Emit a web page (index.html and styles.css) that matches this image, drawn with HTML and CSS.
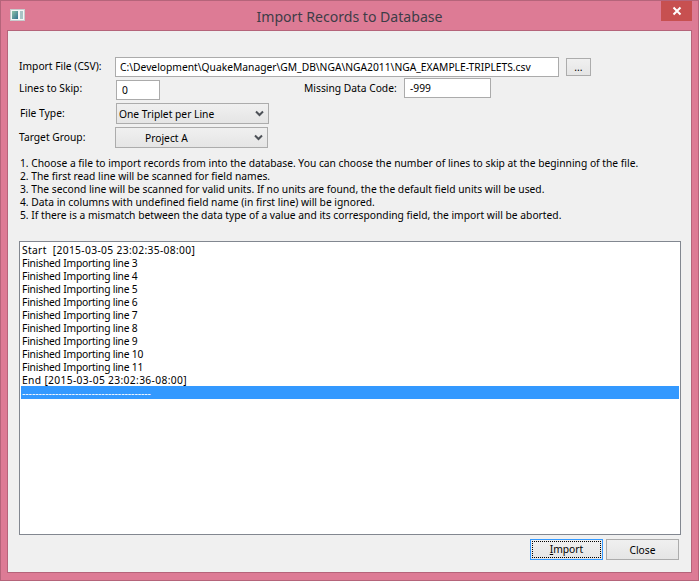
FILE: index.html
```html
<!DOCTYPE html>
<html lang="en">
<head>
<meta charset="utf-8">
<title>Import Records to Database</title>
<link rel="stylesheet" href="styles.css">
</head>
<body>
<div class="window">
  <header class="titlebar">
    <svg class="app-icon" width="15" height="12" viewBox="0 0 15 12">
      <defs>
        <linearGradient id="pane" x1="0" y1="0" x2="1" y2="1">
          <stop offset="0" stop-color="#8fc4a8"/>
          <stop offset="1" stop-color="#2f6f8f"/>
        </linearGradient>
      </defs>
      <rect x="0.5" y="0.5" width="14" height="11" fill="#f4f6f6" stroke="#c9ccce"/>
      <rect x="2" y="2" width="6" height="8" fill="url(#pane)"/>
      <rect x="10" y="2" width="3" height="8" fill="#a9c3c6"/>
    </svg>
    <h1 class="title">Import Records to Database</h1>
    <div class="close-btn">
      <svg width="10" height="10" viewBox="0 0 10 10"><path d="M1.5 1.5L8.5 8.5M8.5 1.5L1.5 8.5" stroke="#fff" stroke-width="2"/></svg>
    </div>
  </header>
  <main class="content">
    <div class="row row-file">
      <span class="label label-raised">Import File (CSV):</span>
      <div class="field field-path">C:\Development\QuakeManager\GM_DB\NGA\NGA2011\NGA_EXAMPLE-TRIPLETS.csv</div>
      <div class="button browse">...</div>
    </div>
    <div class="row row-skip">
      <span class="label label-skip">Lines to Skip:</span>
      <div class="field field-skip">0</div>
      <span class="label-missing">Missing Data Code:</span>
      <div class="field field-code">-999</div>
    </div>
    <div class="row row-type">
      <span class="label label-raised label-type">File Type:</span>
      <div class="combo">One Triplet per Line
        <svg class="chevron" width="9" height="7" viewBox="0 0 9 7"><path d="M1 1.5L4.5 5L8 1.5" fill="none" stroke="#4d5157" stroke-width="2"/></svg>
      </div>
    </div>
    <div class="row row-group">
      <span class="label label-raised">Target Group:</span>
      <div class="combo combo-group">Project A
        <svg class="chevron" width="9" height="7" viewBox="0 0 9 7"><path d="M1 1.5L4.5 5L8 1.5" fill="none" stroke="#4d5157" stroke-width="2"/></svg>
      </div>
    </div>
    <ol class="notes">
      <li>1. Choose a file to import records from into the database. You can choose the number of lines to skip at the beginning of the file.</li>
      <li>2. The first read line will be scanned for field names.</li>
      <li>3. The second line will be scanned for valid units. If no units are found, the the default field units will be used.</li>
      <li>4. Data in columns with undefined field name (in first line) will be ignored.</li>
      <li>5. If there is a mismatch between the data type of a value and its corresponding field, the import will be aborted.</li>
    </ol>
    <ul class="log">
      <li class="stamp">Start&nbsp; [2015-03-05 23:02:35-08:00]</li>
      <li>Finished Importing line 3</li>
      <li>Finished Importing line 4</li>
      <li>Finished Importing line 5</li>
      <li>Finished Importing line 6</li>
      <li>Finished Importing line 7</li>
      <li>Finished Importing line 8</li>
      <li>Finished Importing line 9</li>
      <li>Finished Importing line 10</li>
      <li>Finished Importing line 11</li>
      <li class="stamp">End [2015-03-05 23:02:36-08:00]</li>
      <li class="selected">---------------------------------------</li>
    </ul>
    <footer class="actions">
      <div class="button action default"><span class="focus"><u>I</u>mport</span></div>
      <div class="button action">Close</div>
    </footer>
  </main>
</div>
</body>
</html>
```
FILE: styles.css
```css
* { box-sizing: border-box; }
html, body { margin: 0; padding: 0; }
body {
  width: 699px;
  height: 581px;
  overflow: hidden;
  font-family: "Noto Sans", "Liberation Sans", sans-serif;
  font-size: 10.28px;
  color: #000;
  background: #fff;
}
.window {
  width: 699px;
  height: 581px;
  display: flex;
  flex-direction: column;
  background: #dd7b95;
  border: 1px solid #b5647a;
  padding: 0 6px 7px;
}
.titlebar {
  height: 29px;
  flex: none;
  display: flex;
  align-items: flex-start;
  justify-content: center;
  position: relative;
}
.app-icon { position: absolute; left: 3px; top: 8px; }
.title {
  margin: 7px 0 0;
  font-family: "Noto Sans", "Liberation Sans", sans-serif;
  font-weight: 400;
  font-size: 14.1px;
  line-height: 18px;
  color: #3d3d47;
}
.close-btn {
  position: absolute;
  right: 0;
  top: 0;
  width: 31px;
  height: 20px;
  background: #c75050;
  display: flex;
  align-items: center;
  justify-content: center;
}
.content {
  flex: 1;
  background: #f0f0f0;
  border: 1px solid #b5647a;
  padding: 26px 10px 0 11px;
  display: flex;
  flex-direction: column;
}
.row { display: flex; align-items: center; white-space: nowrap; }
.label { width: 96px; flex: none; }
.label-raised { margin-bottom: 2px; }
.label-type { padding-left: 1px; }
.label-skip { align-self: flex-start; margin-top: 3px; }
.field {
  height: 20px;
  line-height: 18px;
  background: #fff;
  border: 1px solid #ababab;
  padding: 0 5px;
  flex: none;
}
.field-path { width: 444px; padding-left: 4px; }
.field-skip { width: 44px; margin: 2px 0 0 1px; }
.field-code { width: 87px; align-self: flex-start; }
.label-missing { margin-left: 144px; width: 100px; align-self: flex-start; margin-top: 3px; }
.row-skip { margin-top: 1px; align-items: flex-start; }
.row-type { margin-top: 3px; }
.row-group { margin-top: 3px; }
.browse {
  width: 25px;
  height: 18px;
  margin-left: 7px;
}
.button {
  border: 1px solid #acacac;
  background: linear-gradient(#f0f0f0, #e5e5e5);
  display: flex;
  align-items: center;
  justify-content: center;
}
.combo {
  position: relative;
  width: 153px;
  height: 21px;
  line-height: 20px;
  margin-left: 1px;
  padding-left: 2px;
  border: 1px solid #acacac;
  background: linear-gradient(#f0f0f0, #e5e5e5);
}
.combo-group { margin-left: 0; padding-left: 29px; }
.chevron { position: absolute; right: 4px; top: 6px; }
.notes {
  list-style: none;
  margin: 9px 0 0 1px;
  padding: 0;
  line-height: 13px;
}
.log {
  list-style: none;
  margin: 19px 0 0;
  padding: 1px;
  height: 294px;
  background: #fff;
  border: 1px solid #828790;
  flex: none;
}
.log li { padding-left: 1px; height: 13px; line-height: 15px; letter-spacing: -0.2px; }
.log .stamp { letter-spacing: 0.34px; }
.log .selected { background: #3399ff; color: #fff; letter-spacing: 0; line-height: 14px; }
.actions {
  display: flex;
  justify-content: flex-end;
  gap: 3px;
  margin-top: 4px;
  padding-right: 2px;
}
.action { width: 73px; height: 21px; }
.default { border-color: #3399ff; padding: 1px; }
.focus {
  flex: 1;
  align-self: stretch;
  border: 1px dotted #000;
  text-align: center;
  line-height: 15px;
}
```
